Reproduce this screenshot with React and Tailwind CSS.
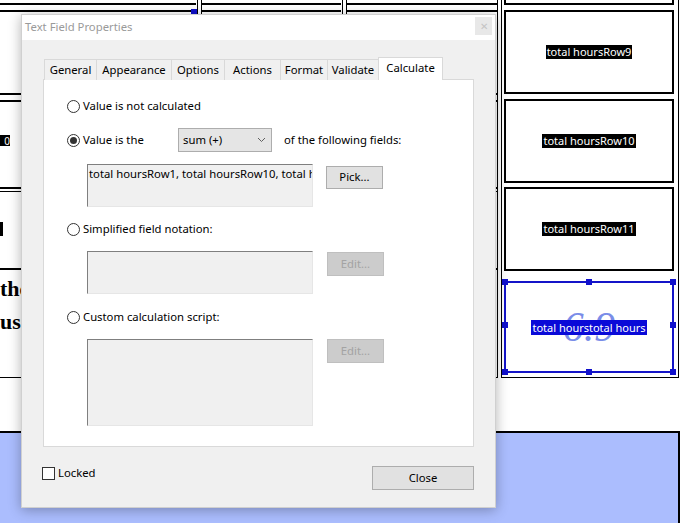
import React from "react";

const tabs = [
  { name: "General", w: "w-[53px]" },
  { name: "Appearance", w: "w-[76px]" },
  { name: "Options", w: "w-[54px]" },
  { name: "Actions", w: "w-[57px]" },
  { name: "Format", w: "w-[48px]" },
  { name: "Validate", w: "w-[52px]" },
];

function Radio({ checked, label }) {
  return (
    <div className="flex h-[16px] items-center">
      <span className="flex h-[13px] w-[13px] items-center justify-center rounded-full border border-[#333] bg-white">
        {checked && <span className="h-[7px] w-[7px] rounded-full bg-[#333]" />}
      </span>
      <span className="ml-[3px] whitespace-nowrap">{label}</span>
    </div>
  );
}

function FieldBox({ tall, children }) {
  return (
    <div
      className={`w-[226px] overflow-hidden whitespace-nowrap border border-t-[#7f7f7f] border-l-[#7f7f7f] border-r-[#e6e6e6] border-b-[#e6e6e6] bg-[#f0f0f0] pl-[1px] leading-[18px] ${
        tall ? "h-[87px]" : "h-[43px]"
      }`}
    >
      {children}
    </div>
  );
}

function Cell({ label }) {
  return (
    <div className="ml-[2px] flex h-[84px] w-[170px] items-center justify-center border-2 border-black bg-white">
      <span className="bg-black px-[1px] text-[11px] leading-[14px] text-white">{label}</span>
    </div>
  );
}

const Handle = ({ pos }) => (
  <span className={`absolute h-[6px] w-[6px] bg-[#1010cc] ${pos}`} />
);

export default function App() {
  return (
    <div className="relative h-[523px] w-[682px] overflow-hidden bg-white font-['Noto_Sans',sans-serif] text-[11.3px] text-black">
      {/* document page behind the dialog */}
      <div className="flex h-full flex-col">
        <div className="flex h-[378px]">
          {/* left part of the table */}
          <div className="flex w-[497px] flex-col border-b border-black">
            <div className="flex h-[14px]">
              <div className="relative mt-[3px] h-[9px] w-[196px] border-y-2 border-black">
                <span className="absolute right-[-1px] top-[4px] h-[6px] w-[6px] bg-[#1010cc]" />
              </div>
              <div className="flex w-[6px] justify-center gap-[3px]">
                <div className="w-px bg-black" />
                <div className="w-px bg-black" />
              </div>
              <div className="mt-[3px] h-[9px] w-[139px] border-y-2 border-black" />
              <div className="flex w-[6px] justify-center gap-[3px]">
                <div className="w-px bg-black" />
                <div className="w-px bg-black" />
              </div>
              <div className="mt-[3px] h-[9px] flex-1 border-y-2 border-black" />
            </div>
            <div className="h-[79px]" />
            <div className="h-[9px] border-y-2 border-black" />
            <div className="h-[33px]" />
            <div className="flex h-[11px] w-[10px] items-center justify-end overflow-hidden bg-black text-[10px] leading-none text-white">
              0
            </div>
            <div className="h-[41px]" />
            <div className="h-[5px] border-t-2 border-b border-black" />
            <div className="h-[30px]" />
            <div className="h-[14px] w-[3px] bg-black" />
            <div className="h-[32px]" />
            <div className="h-[2px] bg-black" />
            <div className="mt-[2px] font-['Liberation_Serif',serif] text-[22px] font-bold leading-[33px]">
              <div>the</div>
              <div>us</div>
            </div>
          </div>

          {/* right column of the table */}
          <div className="flex flex-1">
            <div className="w-[4px] border-l border-black" />
            <div className="flex w-[177px] flex-col border-l border-black">
              <div className="ml-[2px] h-[5px] w-[170px] border-x-2 border-b-2 border-black" />
              <div className="mt-[5px]">
                <Cell label="total hoursRow9" />
              </div>
              <div className="mt-[5px]">
                <Cell label="total hoursRow10" />
              </div>
              <div className="mt-[4px]">
                <Cell label="total hoursRow11" />
              </div>
              <div className="relative ml-[2px] mt-[10px] flex h-[92px] w-[170px] items-center justify-center border-2 border-[#1414c8]">
                <span className="absolute font-['Liberation_Serif',serif] text-[42px] italic leading-none text-[#7a8de8]">
                  6.9
                </span>
                <span className="relative bg-[#0a0ad8] px-[1px] text-[11px] leading-[15px] text-white">
                  total hourstotal hours
                </span>
                <Handle pos="-left-[4px] -top-[4px]" />
                <Handle pos="left-[80px] -top-[4px]" />
                <Handle pos="-right-[4px] -top-[4px]" />
                <Handle pos="-left-[4px] top-[39px]" />
                <Handle pos="-right-[4px] top-[39px]" />
                <Handle pos="-left-[4px] -bottom-[4px]" />
                <Handle pos="left-[80px] -bottom-[4px]" />
                <Handle pos="-right-[4px] -bottom-[4px]" />
              </div>
              <div className="flex-1 border-b border-black" />
            </div>
            <div className="flex-1 border-l border-black" />
          </div>
        </div>
        <div className="h-[53px]" />
        <div className="w-[680px] flex-1 border-t-2 border-r-2 border-black bg-[#abbdfe]" />
      </div>

      {/* Text Field Properties dialog */}
      <div className="absolute left-[21px] top-[14px] flex h-[494px] w-[475px] flex-col border border-[#d0d0d0] bg-[#f0f0f0] shadow-[0_2px_12px_rgba(0,0,0,0.3)]">
        <div className="flex h-[25px] items-start justify-between bg-white pl-[3px] pr-[3px]">
          <span className="mt-[4px] text-[#9a9a9a]">Text Field Properties</span>
          <div className="mt-[2px] flex h-[18px] w-[17px] items-center justify-center bg-[#e8e8e8] text-[10px] text-[#c4c4c4]">
            ✕
          </div>
        </div>

        <div className="flex flex-1 flex-col px-[21px] pt-[17px] pb-[17px]">
          {/* tabs */}
          <div className="relative z-10 -mb-px flex items-end pl-[1px]">
            {tabs.map((t, i) => (
              <div
                key={t.name}
                className={`flex h-[21px] items-center justify-center border border-b-0 border-[#d9d9d9] bg-[#f0f0f0] ${t.w} ${
                  i > 0 ? "-ml-px" : ""
                }`}
              >
                {t.name}
              </div>
            ))}
            <div className="-ml-px flex h-[23px] w-[65px] items-center justify-center border border-b-0 border-[#d9d9d9] bg-white pb-[2px]">
              Calculate
            </div>
          </div>

          {/* tab panel */}
          <div className="flex-1 border border-[#d9d9d9] bg-white pl-[23px] pt-[18px]">
            <Radio label="Value is not calculated" />

            <div className="mt-[14px] flex h-[24px] items-center">
              <span className="flex h-[13px] w-[13px] items-center justify-center rounded-full border border-[#333] bg-white">
                <span className="h-[7px] w-[7px] rounded-full bg-[#333]" />
              </span>
              <span className="ml-[3px] w-[95px]">Value is the</span>
              <div className="flex h-[24px] w-[94px] items-center justify-between border border-[#adadad] bg-[#e5e5e5] pl-[4px] pr-[5px]">
                <span>sum (+)</span>
                <svg width="9" height="6" viewBox="0 0 9 6">
                  <path d="M1 1l3.5 3.5L8 1" fill="none" stroke="#606060" strokeWidth="1" />
                </svg>
              </div>
              <span className="ml-[12px]">of the following fields:</span>
            </div>

            <div className="ml-[20px] mt-[12px] flex items-start">
              <FieldBox>total hoursRow1, total hoursRow10, total h</FieldBox>
              <button className="ml-[13px] mt-[2px] h-[23px] w-[57px] border border-[#adadad] bg-[#e1e1e1]">
                Pick...
              </button>
            </div>

            <div className="mt-[14px]">
              <Radio label="Simplified field notation:" />
            </div>
            <div className="ml-[20px] mt-[14px] flex items-start">
              <FieldBox />
              <button className="ml-[14px] mt-[1px] h-[24px] w-[57px] border border-[#bfbfbf] bg-[#cccccc] text-[#a3a3a3]">
                Edit...
              </button>
            </div>

            <div className="mt-[15px]">
              <Radio label="Custom calculation script:" />
            </div>
            <div className="ml-[20px] mt-[14px] flex items-start">
              <FieldBox tall />
              <button className="ml-[14px] h-[24px] w-[57px] border border-[#bfbfbf] bg-[#cccccc] text-[#a3a3a3]">
                Edit...
              </button>
            </div>
          </div>

          {/* footer */}
          <div className="mt-[19px] flex h-[24px] items-start justify-between">
            <div className="-ml-px mt-px flex h-[13px] items-center">
              <span className="h-[13px] w-[13px] border border-[#333] bg-white" />
              <span className="ml-[3px]">Locked</span>
            </div>
            <button className="h-[24px] w-[102px] border border-[#adadad] bg-[#e1e1e1]">Close</button>
          </div>
        </div>
      </div>
    </div>
  );
}
